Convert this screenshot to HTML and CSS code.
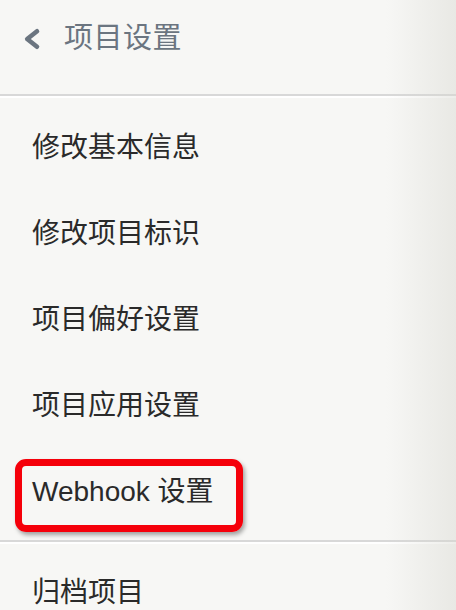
FILE: index.html
```html
<!DOCTYPE html>
<html lang="zh-CN">
<head>
<meta charset="utf-8">
<title>项目设置</title>
<link rel="stylesheet" href="styles.css">
</head>
<body>
<div class="panel">
  <header class="header">
    <svg class="back" width="18" height="24" viewBox="0 0 18 24"><polyline points="14,4.3 4.2,12 14,19.7" fill="none" stroke="#6b7580" stroke-width="4.6" stroke-linecap="round" stroke-linejoin="round"/></svg>
    <span class="title">项目设置</span>
  </header>
  <ul class="menu">
    <li class="item">修改基本信息</li>
    <li class="item">修改项目标识</li>
    <li class="item">项目偏好设置</li>
    <li class="item">项目应用设置</li>
    <li class="item highlighted"><span class="mark"></span>Webhook 设置</li>
  </ul>
  <ul class="menu menu-bottom">
    <li class="item">归档项目</li>
  </ul>
</div>
</body>
</html>
```

FILE: styles.css
```css
html, body {
  margin: 0;
  padding: 0;
}
body {
  background: #f7f7f5;
  font-family: "Liberation Sans", "Noto Sans CJK SC", sans-serif;
  overflow: hidden;
}
.panel {
  position: relative;
  width: 456px;
  height: 610px;
  overflow: hidden;
}
.panel::after {
  content: "";
  position: absolute;
  top: 0;
  right: 0;
  width: 70px;
  height: 100%;
  background: linear-gradient(to right, rgba(220,220,212,0) 0%, rgba(215,215,208,0.45) 100%);
  pointer-events: none;
}
.header {
  height: 96px;
  display: flex;
  align-items: center;
  padding-left: 23px;
  padding-bottom: 17px;
  box-sizing: border-box;
  padding-top: 0;
  border-bottom: 2px solid #d8d8d8;
  box-shadow: 0 2px 0 #ffffff;
}
.back {
  display: block;
  margin-right: 23px;
}
.title {
  font-size: 29px;
  color: #6b7580;
  line-height: 1;
  letter-spacing: 0.5px;
}
.menu {
  list-style: none;
  margin: 0;
  padding: 6px 0 8px;
  border-bottom: 2px solid #d8d8d8;
  box-shadow: 0 2px 0 #ffffff;
}
.menu-bottom {
  border-bottom: none;
  box-shadow: none;
  padding-top: 5px;
}
.item {
  height: 86px;
  display: flex;
  align-items: center;
  padding-left: 32px;
  font-size: 28px;
  color: #2a2a2a;
  position: relative;
}
.mark {
  position: absolute;
  left: 15px;
  top: 13px;
  width: 228px;
  height: 73px;
  box-sizing: border-box;
  border: 7px solid #f5000a;
  border-radius: 11px;
  box-shadow: 2px 3px 4px rgba(0,0,0,0.35);
}
```
